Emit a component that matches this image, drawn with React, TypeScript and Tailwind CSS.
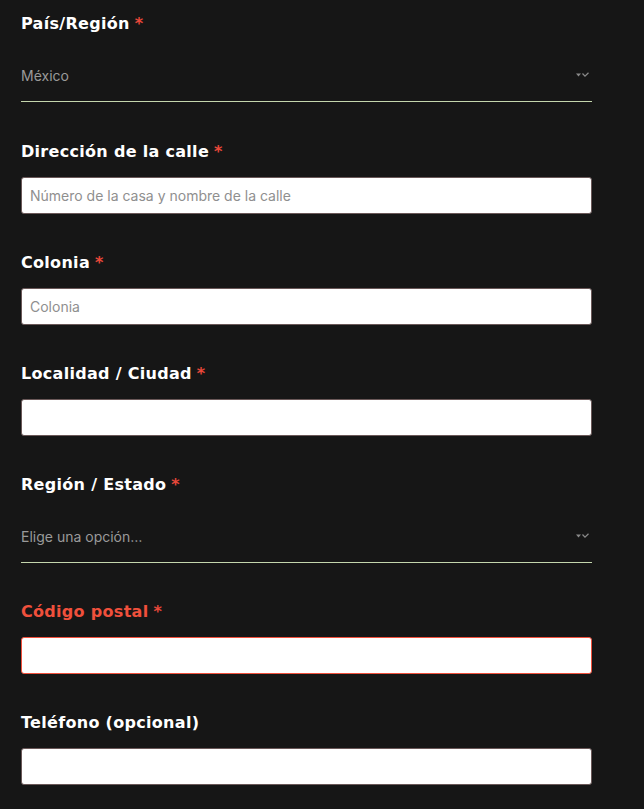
import React from "react";

const labelFont = { fontFamily: '"DejaVu Sans", sans-serif', letterSpacing: "0.3px" };

function Label({ text, required, error }: { text: string; required?: boolean; error?: boolean }) {
  return (
    <div
      className={`h-6 leading-6 text-[16px] font-bold ${error ? "text-[#f0503c]" : "text-white"}`}
      style={labelFont}
    >
      {text}
      {required && <span className="ml-[5px] text-[#e8483a]">*</span>}
    </div>
  );
}

function Arrow() {
  return (
    <svg width="14" height="6" viewBox="0 0 14 6" className="shrink-0">
      <path d="M0 1.5 H5 L2.5 4.5 Z" fill="#8a8a8a" />
      <path d="M6.5 1.5 L9 4.2 L12.5 0.8" stroke="#8a8a8a" strokeWidth="1.2" fill="none" />
    </svg>
  );
}

function SelectField({ label, value }: { label: string; value: string }) {
  return (
    <div>
      <Label text={label} required />
      <div className="mt-[13px] h-[53px] border-b border-[#c4d6ad] flex items-center justify-between pr-[2px]">
        <span className="text-[14px] text-[#9a9a9a]" style={{ fontFamily: "Inter, sans-serif" }}>
          {value}
        </span>
        <Arrow />
      </div>
    </div>
  );
}

function InputField({
  label,
  placeholder,
  required,
  error,
  first,
}: {
  label: string;
  placeholder?: string;
  required?: boolean;
  error?: boolean;
  first?: boolean;
}) {
  return (
    <div className={first ? "mt-px" : ""}>
      <Label text={label} required={required} error={error} />
      <div
        className={`mt-[13px] h-[37px] bg-white rounded-[3px] border flex items-center px-2 ${
          error ? "border-[#f0503c]" : "border-[#6a5858]"
        }`}
      >
        {placeholder && (
          <span className="text-[14px] text-[#8f8f8f]" style={{ fontFamily: "Inter, sans-serif" }}>
            {placeholder}
          </span>
        )}
      </div>
    </div>
  );
}

export default function App() {
  return (
    <div className="min-h-[809px] w-[644px] bg-[#161616] pt-3 pl-[21px]">
      <div className="w-[571px] flex flex-col gap-[37px]">
        <SelectField label="País/Región" value="México" />
        <InputField
          label="Dirección de la calle"
          placeholder="Número de la casa y nombre de la calle"
          required
          first
        />
        <InputField label="Colonia" placeholder="Colonia" required />
        <InputField label="Localidad / Ciudad" required />
        <SelectField label="Región / Estado" value="Elige una opción…" />
        <InputField label="Código postal" required error />
        <InputField label="Teléfono (opcional)" />
      </div>
    </div>
  );
}
